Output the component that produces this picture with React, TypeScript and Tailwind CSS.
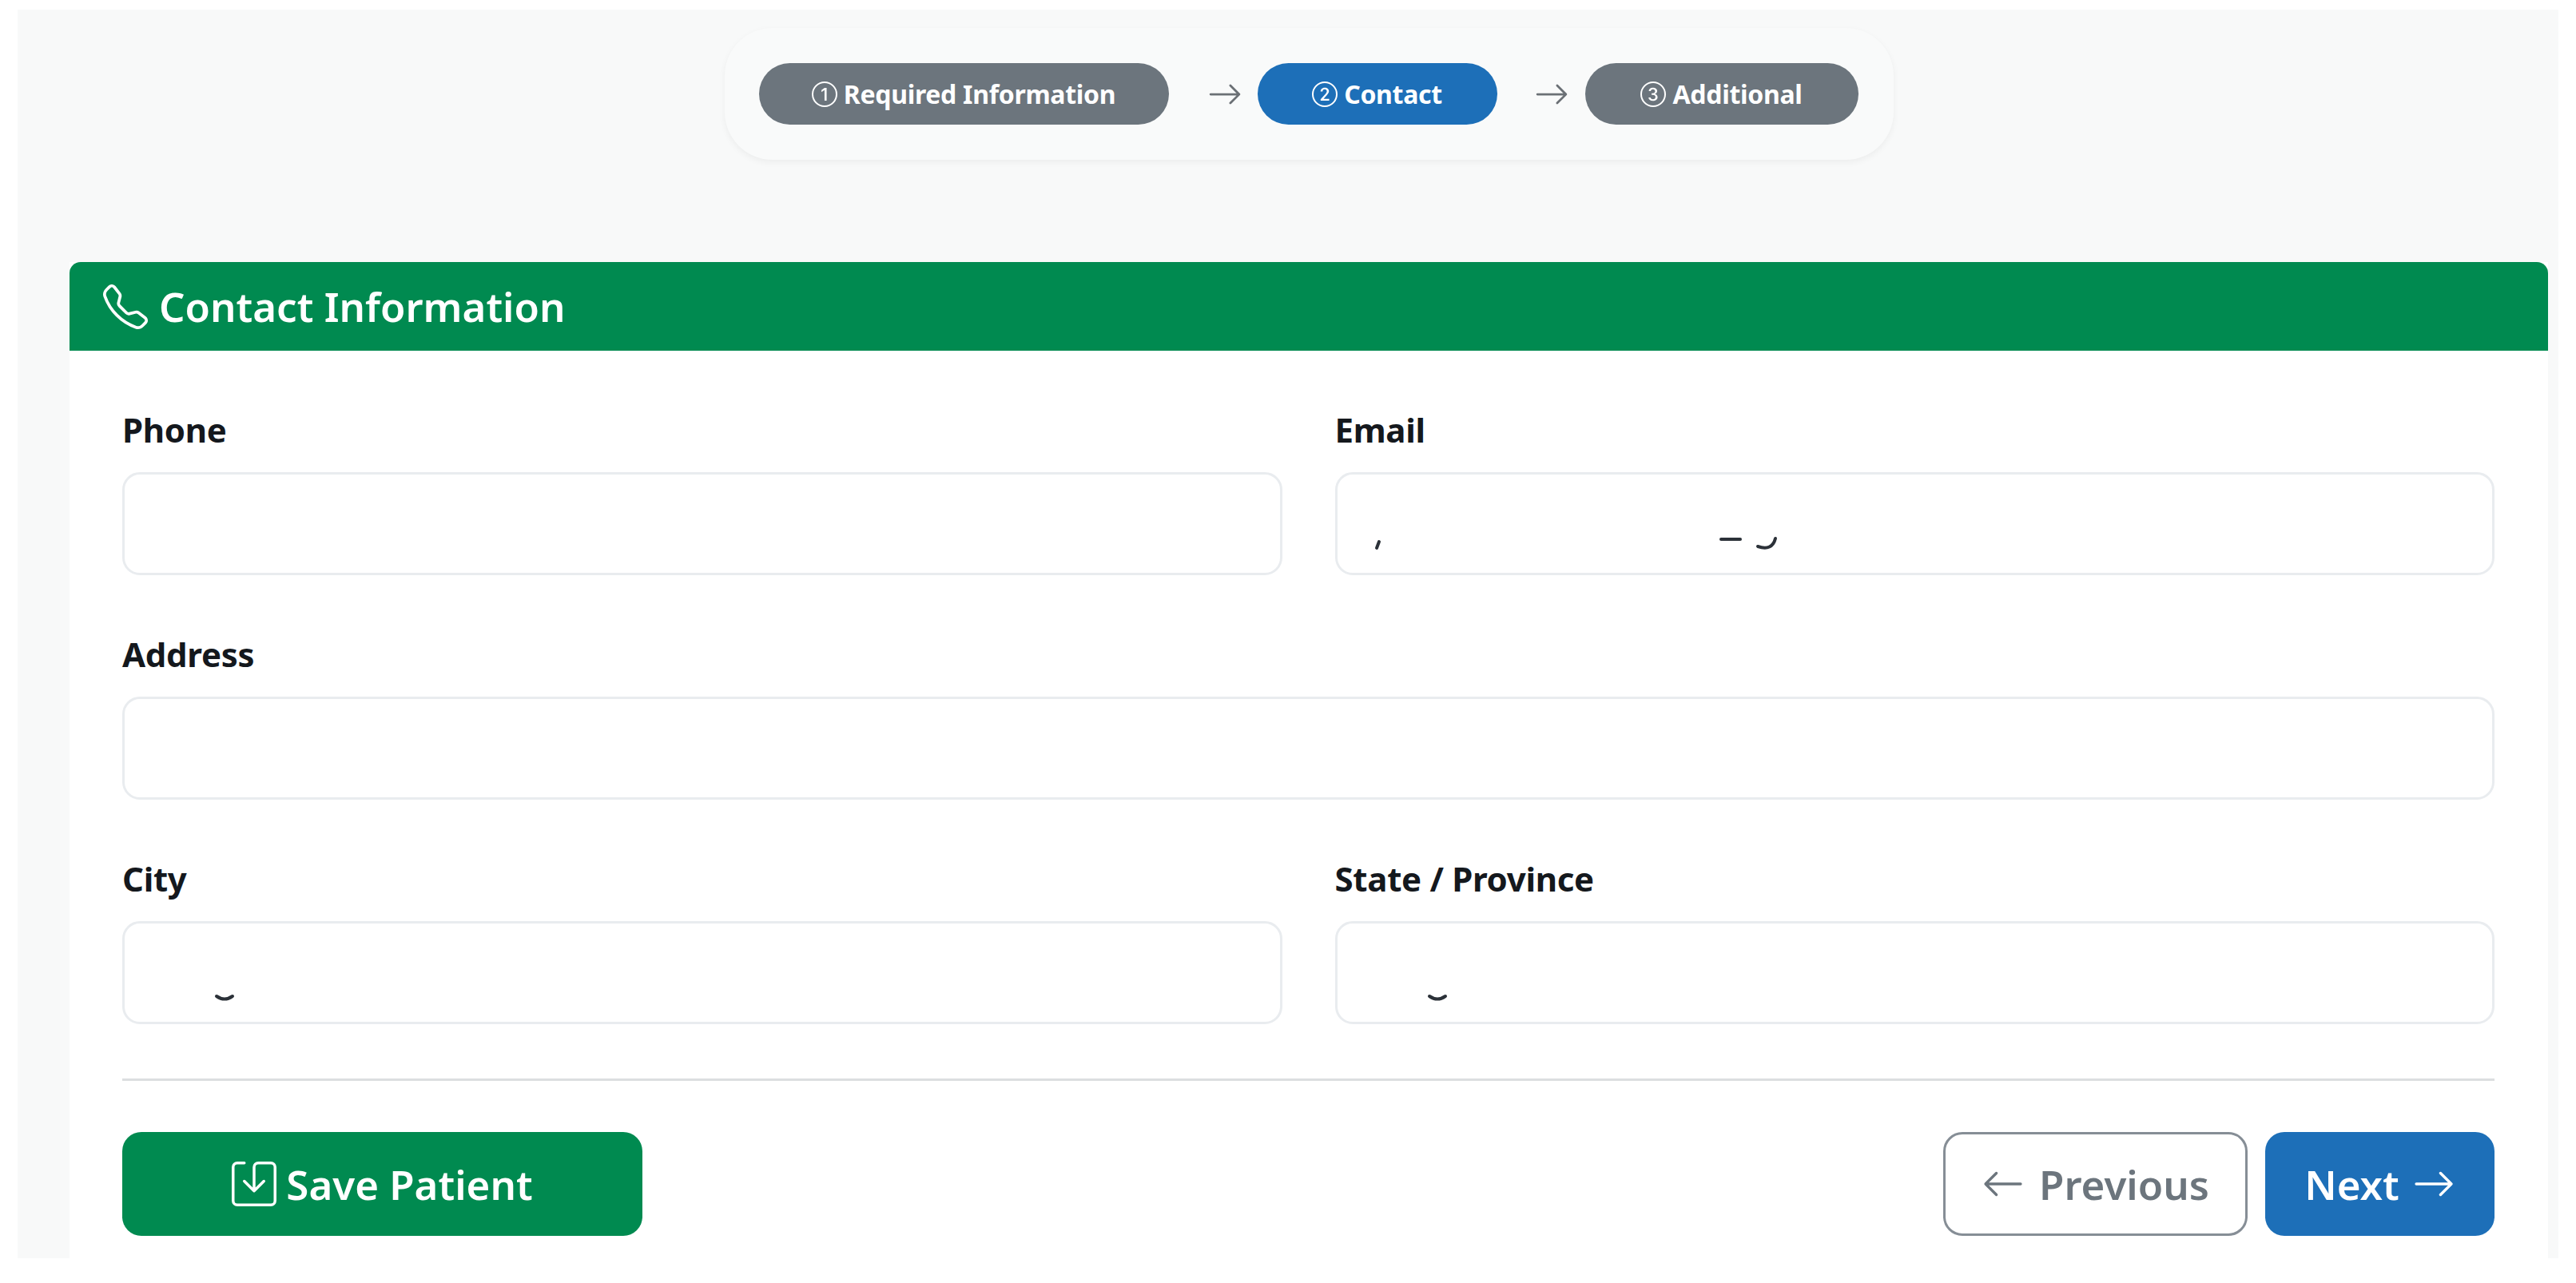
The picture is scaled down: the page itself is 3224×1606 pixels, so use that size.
import { Bs1Circle, Bs2Circle, Bs3Circle, BsArrowLeft, BsArrowRight, BsSave, BsTelephone } from 'react-icons/bs';

const Step = ({ icon, label, active, width }: { icon: React.ReactNode; label: string; active?: boolean; width: string }) => {
    return (
        <div className={`flex h-[77px] items-center justify-center gap-[8px] rounded-full text-[32px] font-bold tracking-[-0.3px] text-white ${width} ${active ? 'bg-[#1d6fb8]' : 'bg-[#6c757d]'}`}>
            {icon}
            <span>{label}</span>
        </div>
    );
};

const Field = ({ label, marks }: { label: string; marks?: React.ReactNode }) => {
    return (
        <div className="flex flex-col">
            <label className="mb-[25px] text-[42px] leading-[56px] font-bold tracking-[-0.3px] text-[#14181d]">{label}</label>
            <div className="relative h-[129px] rounded-[22px] border-[3px] border-[#e9ecef] bg-white">
                {marks}
            </div>
        </div>
    );
};

const App = () => {
    return (
        <div className="min-h-screen bg-white pt-[12px] pl-[22px] pr-[22px] font-['Noto_Sans',sans-serif]">
            <div className="w-[3180px] bg-[#f8f9f9] pl-[65px] pr-[13px] pt-[23px]">
                {/* stepper */}
                <div className="flex justify-center">
                    <div className="flex h-[165px] items-center rounded-[60px] bg-[#f9fafa] pl-[43px] pr-[44px] shadow-[0_3px_8px_rgba(0,0,0,0.05)]">
                        <Step width="w-[513px]" label="Required Information" icon={<Bs1Circle className="h-[32px] w-[32px]" />} />
                        <BsArrowRight className="ml-[48px] mr-[19px] h-[44px] w-[44px] text-[#6b7075]" />
                        <Step width="w-[300px]" active label="Contact" icon={<Bs2Circle className="h-[32px] w-[32px]" />} />
                        <BsArrowRight className="ml-[46px] mr-[20px] h-[44px] w-[44px] text-[#6b7075]" />
                        <Step width="w-[342px]" label="Additional" icon={<Bs3Circle className="h-[32px] w-[32px]" />} />
                    </div>
                </div>

                {/* card */}
                <div className="mt-[128px] bg-white">
                    <div className="flex h-[111px] items-center gap-[14px] rounded-t-[14px] bg-[#008a50] pl-[42px] text-[51px] font-semibold text-white">
                        <BsTelephone className="h-[56px] w-[56px]" />
                        <span>Contact Information</span>
                    </div>

                    <div className="pl-[66px] pr-[67px] pt-[71px] pb-[28px]">
                        <div className="grid grid-cols-2 gap-x-[66px] gap-y-[71px]">
                            <Field label="Phone" />
                            <Field
                                label="Email"
                                marks={
                                    <svg className="absolute left-0 top-0 h-full w-full" fill="none" stroke="#2b3138" strokeWidth="4" strokeLinecap="round">
                                        <path d="M52 84 L49 92" />
                                        <path d="M480 81 H504" />
                                        <path d="M526 90 Q544 96 548 80" />
                                    </svg>
                                }
                            />
                            <div className="col-span-2">
                                <Field label="Address" />
                            </div>
                            <Field
                                label="City"
                                marks={
                                    <svg className="absolute left-0 top-0 h-full w-full" fill="none" stroke="#2b3138" strokeWidth="4" strokeLinecap="round">
                                        <path d="M115 91 Q125 98 135 91" />
                                    </svg>
                                }
                            />
                            <Field
                                label="State / Province"
                                marks={
                                    <svg className="absolute left-0 top-0 h-full w-full" fill="none" stroke="#2b3138" strokeWidth="4" strokeLinecap="round">
                                        <path d="M115 91 Q125 98 135 91" />
                                    </svg>
                                }
                            />
                        </div>

                        <div className="mt-[68px] h-[3px] bg-[#dcdee0]"></div>

                        <div className="mt-[64px] flex items-center justify-between">
                            <button className="flex h-[130px] w-[651px] items-center justify-center gap-[12px] rounded-[24px] bg-[#008a50] text-[51px] font-semibold text-white">
                                <BsSave className="h-[56px] w-[56px]" />
                                <span>Save Patient</span>
                            </button>
                            <div className="flex gap-[22px]">
                                <button className="flex h-[130px] w-[381px] items-center justify-center gap-[18px] rounded-[24px] border-[3px] border-[#868e96] bg-white text-[51px] font-semibold text-[#6c757d]">
                                    <BsArrowLeft className="h-[54px] w-[54px]" />
                                    <span>Previous</span>
                                </button>
                                <button className="flex h-[130px] w-[287px] items-center justify-center gap-[16px] rounded-[24px] bg-[#1d6fb8] text-[51px] font-semibold text-white">
                                    <span>Next</span>
                                    <BsArrowRight className="h-[54px] w-[54px]" />
                                </button>
                            </div>
                        </div>
                    </div>
                </div>
            </div>
        </div>
    );
};

export default App;
